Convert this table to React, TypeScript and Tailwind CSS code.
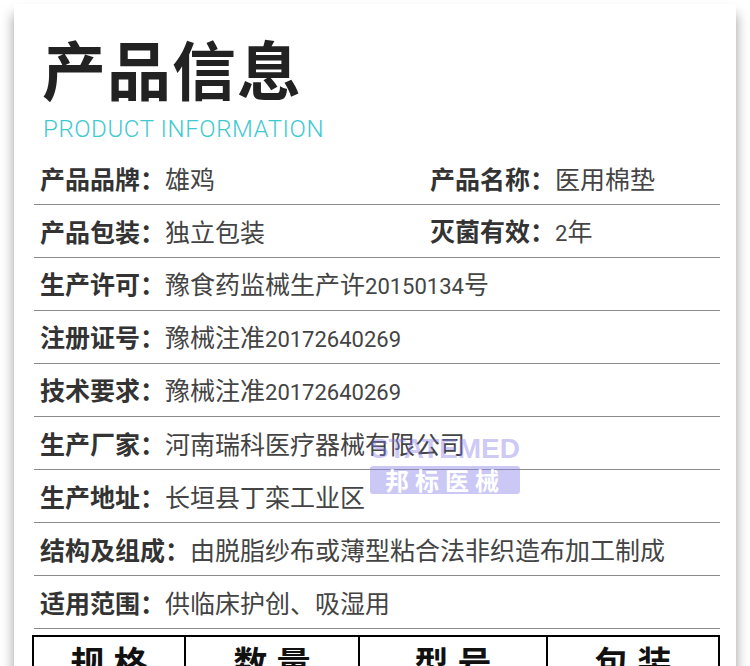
import React from 'react';

type Row = { label: string; value: string; label2?: string; value2?: string };

const rows: Row[] = [
  { label: '产品品牌：', value: '雄鸡', label2: '产品名称：', value2: '医用棉垫' },
  { label: '产品包装：', value: '独立包装', label2: '灭菌有效：', value2: '2年' },
  { label: '生产许可：', value: '豫食药监械生产许20150134号' },
  { label: '注册证号：', value: '豫械注准20172640269' },
  { label: '技术要求：', value: '豫械注准20172640269' },
  { label: '生产厂家：', value: '河南瑞科医疗器械有限公司' },
  { label: '生产地址：', value: '长垣县丁栾工业区' },
  { label: '结构及组成：', value: '由脱脂纱布或薄型粘合法非织造布加工制成' },
  { label: '适用范围：', value: '供临床护创、吸湿用' },
];

const cols = [
  { a: '规', b: '格', w: 'w-[152px]' },
  { a: '数', b: '量', w: 'w-[174px]' },
  { a: '型', b: '号', w: 'w-[188px]' },
  { a: '包', b: '装', w: 'flex-1' },
];

const cjk = { fontFamily: '"Noto Sans CJK SC", sans-serif' };

// digits in the source image use a narrower face than the CJK text
function Value({ text }: { text: string }) {
  const parts = text.split(/(\d+)/).filter(Boolean);
  return (
    <span className="text-[#444]">
      {parts.map((p, i) =>
        /^\d+$/.test(p) ? (
          <span key={i} className="text-[22px]" style={{ fontFamily: 'Roboto, sans-serif' }}>
            {p}
          </span>
        ) : (
          <span key={i}>{p}</span>
        )
      )}
    </span>
  );
}

function InfoCell({ label, value }: { label: string; value: string }) {
  return (
    <div className="flex items-baseline text-[25px] leading-none whitespace-nowrap">
      <span className="font-bold text-[#333]">{label}</span>
      <Value text={value} />
    </div>
  );
}

export default function App() {
  return (
    <div className="w-[750px] h-[666px] overflow-hidden bg-white" style={cjk}>
      <div className="relative mx-[14px] mt-[4px] h-[700px] bg-white shadow-[0_10px_12px_rgba(0,0,0,0.4)]">
        <div className="pl-[28px] pt-[31px]">
          <div className="text-[64px] leading-none font-bold text-[#222] tracking-[1px]">产品信息</div>
          <div
            className="mt-[18px] ml-[1px] text-[24px] leading-none font-light text-[#3ec9d1] tracking-[0.6px]"
            style={{ fontFamily: 'Roboto, sans-serif' }}
          >
            PRODUCT INFORMATION
          </div>
        </div>

        <div className="mt-[11px] ml-[20px] mr-[16px]">
          {rows.map((r) => (
            <div key={r.label} className="flex items-center h-[53px] border-b border-[#8a8a8a] pl-[6px]">
              <div className="w-[390px]">
                <InfoCell label={r.label} value={r.value} />
              </div>
              {r.label2 && <InfoCell label={r.label2} value={r.value2 ?? ''} />}
            </div>
          ))}
        </div>

        <div className="mt-[6px] ml-[18px] mr-[16px] flex border-2 border-black h-[80px]">
          {cols.map((c, i) => (
            <div
              key={c.a}
              className={`${c.w} flex justify-center gap-[9px] pt-[8px] text-[34px] leading-none font-bold text-[#111] ${i < 3 ? 'border-r-2 border-black' : ''}`}
            >
              <span>{c.a}</span>
              <span>{c.b}</span>
            </div>
          ))}
        </div>

        <div className="absolute left-[356px] top-[431px] flex flex-col items-center w-[150px]">
          <div
            className="text-[28px] leading-none font-bold text-[#7c72e8]/40"
            style={{ fontFamily: '"Liberation Sans", sans-serif' }}
          >
            STATEMED
          </div>
          <div className="mt-[3px] w-[150px] h-[28px] rounded-[3px] bg-[#8c84ec]/45 flex items-center justify-center text-[24px] leading-none font-bold text-white tracking-[6px]">
            邦标医械
          </div>
        </div>
      </div>
    </div>
  );
}
